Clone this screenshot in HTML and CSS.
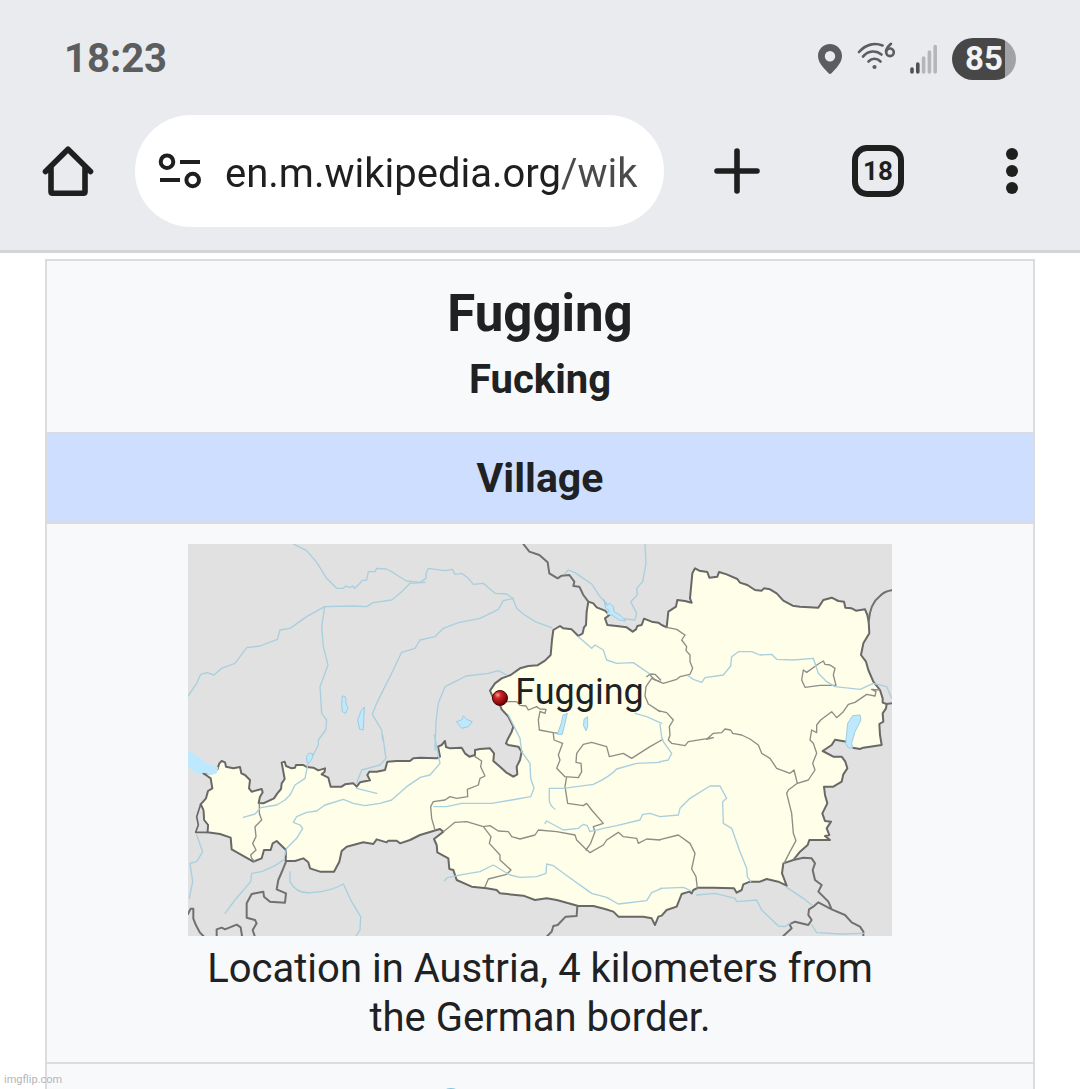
FILE: index.html
```html
<!DOCTYPE html>
<html lang="en">
<head>
<meta charset="utf-8">
<meta name="viewport" content="width=device-width, initial-scale=1">
<title>Fugging</title>
<link rel="stylesheet" href="styles.css">
</head>
<body>
<header class="chrome">
  <div class="status">
    <time class="clock">18:23</time>
    <div class="indicators">
      <svg class="pin" width="24" height="30" viewBox="0 0 24 30" aria-label="Location"><path fill="#5c5d5f" fill-rule="evenodd" d="M12 0C5.300 0 0 5.300 0 12c0 4.300 2.200 7.800 5 11.200l5.500 6q1.500 1.500 3 0l5.500-6c2.800-3.400 5-6.900 5-11.200C24 5.300 18.700 0 12 0Zm0 7a5.200 5.200 0 1 1 0 10.400A5.200 5.200 0 0 1 12 7Z"/></svg>
      <svg class="wifi" width="38" height="34" viewBox="0 0 38 34" aria-label="Wi-Fi 6"><g fill="none" stroke="#5c5d5f" stroke-width="2.600" stroke-linecap="round"><path d="M2 10C9 2 18 .5 25.500 3.500"/><path d="M6 14.500c5.500-6 13-6.500 18.500-2"/><path d="M11.500 19.500c3.500-3.600 8.500-3.600 12 0"/><path d="M34 1.800c-3 2.500-4.600 4.800-5 7.500"/><circle cx="33" cy="10.300" r="3.800"/></g><circle cx="17.500" cy="25" r="2.100" fill="#5c5d5f"/></svg>
      <svg class="signal" width="27" height="30" viewBox="0 0 27 30" aria-label="Signal"><g stroke-width="3.600" stroke-linecap="round"><path stroke="#505153" d="M2 25v3M7.800 20v8"/><path stroke="#b5b6b9" d="M13.600 14v14M19.400 8v20M25.200 2.500v25.500"/></g></svg>
      <span class="battery">85</span>
    </div>
  </div>
  <div class="toolbar">
    <button class="tool tool-home" type="button" aria-label="Home"><svg width="52" height="52" viewBox="0 0 52 52" fill="none" stroke="#1f1f1f" stroke-width="5.600" stroke-linecap="round" stroke-linejoin="round"><path d="M3.500 26.500 26 4.200 48.500 26.500M9 22v24.500q0 1.700 1.700 1.700h30.600q1.700 0 1.700-1.700V22"/></svg></button>
    <div class="omnibox">
      <svg width="44" height="38" viewBox="0 0 44 38" fill="none" stroke="#1f1f1f" stroke-width="4"><circle cx="9" cy="9.700" r="6.300"/><path d="M22 10h20M2 28h20"/><circle cx="34.700" cy="28" r="6.300"/></svg>
      <input class="address" type="text" aria-label="Address" value="en.m.wikipedia.org/wik">
    </div>
    <button class="tool tool-new" type="button" aria-label="New tab"><svg width="46" height="46" viewBox="0 0 46 46" stroke="#1f1f1f" stroke-width="5.600" stroke-linecap="round"><path d="M23 3v40M3 23h40"/></svg></button>
    <button class="tool tool-tabs" type="button" aria-label="Open tabs"><span class="tab-count">18</span></button>
    <button class="tool tool-menu" type="button" aria-label="Menu"><svg width="12" height="46" viewBox="0 0 12 46" fill="#1f1f1f"><circle cx="6" cy="6" r="6"/><circle cx="6" cy="23" r="6"/><circle cx="6" cy="40" r="6"/></svg></button>
  </div>
</header>
<main class="page">
  <table class="infobox">
    <tbody>
      <tr><th class="heading"><div class="name">Fugging</div><div class="former">Fucking</div></th></tr>
      <tr><th class="kind">Village</th></tr>
      <tr><td class="location">
        <div class="map">
          <svg class="map-art" viewBox="24 12 2112 1176" role="img" aria-label="Map of Austria" fill="none" stroke-linejoin="round" stroke-linecap="round">
            <path fill="#e1e1e1" d="M24 12h2112v1176H24z"/>
            <!-- country -->
            <path fill="#fefee9" stroke="#686866" stroke-width="6" d="M70 700L82 708 92 715 97 745 84 753 78 775 62 793 70 810 72 840 84 855 82 877
              120 882 152 893 155 928 220 965 245 955 252 930 272 930 278 910 290 903 318 930 317 963 345 963 370 955 385 967 390 985 420 995 462 995 478 965 485 933 500 920 550 907 580 912 590 898 620 907 625 902 650 902 660 910 690 900 720 885
              760 873 780 867 790 875 762 897 770 915 772 937 805 955 808 987 820 990 830 1020 875 1040 920 1045 950 1050 960 1060 1030 1067 1065 1080 1100 1075 1130 1080 1160 1088 1195 1098 1240 1098 1275 1107 1300 1115 1315 1130 1390 1130 1415 1135 1425 1155 1435 1130
              1445 1127 1460 1110 1490 1100 1505 1062 1528 1055 1535 1060 1540 1050 1555 1043 1600 1043 1662 1045 1670 1058 1685 1050 1690 1033 1710 1025 1740 1025 1760 1017 1795 1025 1820 1037 1806 1000 1810 970 1840 960 1860 935 1883 915 1888 900 1950 900 1935 888 1948 885 1940 865 1953 845 1935 843 1927 820 1942 790 1935 765 1932 740 1960 740 1985 725 1990 703 2002 685 1996 665 1985 650 1960 650 1928 633 1955 615 1965 599 2000 605 2018 623 2040 627 2050 623 2105 615
              2100 585 2098 552 2110 545 2108 520 2118 505 2120 492 2108 488 2108 475 2100 450 2080 425 2065 390 2058 365 2043 345 2050 310 2068 280 2066 245 2062 225 2055 208 2028 212 2015 205 1996 203 1992 185 1975 183 1955 173 1930 180 1915 203 1860 200 1838 197 1810 182 1790 160 1770 148 1752 145 1745 152 1725 150 1702 135 1680 128 1672 117 1640 103 1617 96 1612 110 1588 113 1582 96 1558 92 1545 85 1537 100 1530 175 1535 188 1515 183 1492 180 1488 200 1465 215 1460 262 1445 255
              1435 248 1415 245 1392 236 1385 255 1372 258 1368 268 1358 275 1340 262 1310 258 1282 255 1275 235 1288 225 1275 212 1250 202 1240 190 1225 185 1220 215 1218 255 1212 262 1208 280 1195 288 1175 268 1150 265 1140 258 1120 270 1116 300 1112 345 1095 362 1072 376 1045 378 1020 385 992 405 965 415 945 430 930 452 938 470 960 495 965 508 985 530 1000 560 995 575 982 600 978 610 985 615 1015 620 1025 635 1020 660 1010 680 1012 703 1000 710 978 697 960 680 940 663 942 640 930 625 900 627 885 630 885 645 868 650 855 640 845 623 810 625 798 621 795 603 785 615 774 620 780 650 770 655 720 653
              700 655 690 663 650 663 622 665 615 690 590 695 568 695 562 705 570 721 540 727 530 740 520 730 495 733 485 740 452 740 445 713 425 703 434 695 435 685 415 691 400 683 380 681 370 675 348 675 345 683 335 685 318 678 314 665 305 668 310 695 314 717 305 730 303 747 292 760 282 775 250 790 236 789 240 770 248 757 245 747 215 755 207 745 210 720 195 705 184 700 180 681 160 685 138 680 135 667 125 663 118 670 112 688 92 700z"/>
            <path fill="#e1e1e1" stroke="#686866" stroke-width="5" d="M62 793L50 830 55 855 47 877 82 877 84 855 72 840 70 810z"/>
            <!-- neighbouring borders -->
            <g stroke="#707070" stroke-width="6">
              <path d="M1030 12L1048 35 1078 45 1103 67 1108 100 1133 115 1145 107 1168 105 1183 125 1180 138 1198 140 1210 165 1225 185"/>
              <path d="M2066 245Q2070 190 2100 168 2115 153 2136 151M2118 492L2136 490"/>
              <path d="M24 1122L32 1106 40 1106 40 1136 48 1156 60 1178 70 1188M110 1188V1168L125 1163 135 1168 170 1154 182 1162 186 1188M318 965L308 990 295 1020 290 1048 318 1060 315 1088 270 1085 252 1070 250 1055 215 1062 200 1090 200 1133 225 1140 230 1150 218 1170 224 1188"/>
              <path d="M1192 1098L1190 1128 1157 1130 1133 1155 1120 1158 1115 1175 1102 1188"/>
              <path d="M1840 960L1870 953 1895 955 1905 970 1898 990 1905 1020 1925 1035 1915 1055 1930 1070 1945 1085 1955 1108 1915 1087 1900 1100 1887 1108 1885 1125 1895 1140 1885 1155 1845 1145 1828 1153 1835 1165 1810 1188M1955 1108L1995 1125 2015 1147 2040 1160 2050 1175 2050 1188"/>
            </g>
            <!-- provinces -->
            <g stroke="#8d8d86" stroke-width="4">
              <path d="M238 790L238 820 245 840 225 860 228 890 218 910 228 930 212 945 215 955 225 965"/>
              <g transform="translate(720 0)">
                <path d="M245 485L290 485 300 496 318 498 325 510 350 500 360 507 378 508 375 520 360 514 355 540 358 570 400 578 420 580M720 425L695 415 678 440 675 468 685 492 720 515M680 410L690 402 705 403 722 420"/>
              </g>
              <g transform="translate(1440 0)">
                <path d="M20 262L50 268 75 285 65 300 80 320 78 332 90 345 90 365 98 385 90 403 60 410 50 418 10 430-15 420-30 405M430 390L425 420 435 442 480 436 528 436 520 405 525 385 510 375 495 373 490 363 475 372 440 397 430 390M-5 512L20 518 40 540 28 560 30 585 25 600 35 610 75 617 85 605 160 593 140 598 160 580 185 578 195 567 212 570 218 580 245 585 270 597 295 615 305 640 330 655 350 685 390 700 402 690 412 730 445 720 465 690 458 670 470 640 460 610 450 600 455 570 470 578 470 555 482 540 515 515 530 533 550 515 565 493 585 487 620 463 645 468 648 455 635 448 658 450M412 730L385 750 380 760 395 820 400 880 408 902 390 935 372 970"/>
                <path d="M0 899L55 885 90 910 105 940 95 987 108 1010 112 1045"/>
              </g>
              <g transform="translate(720 585)">
                <path d="M165 65L185 78 182 95 195 123 180 130 175 150 142 163 143 185 110 190 90 185 75 195 40 200 32 215 35 250 45 285M70 290L105 262 140 260 190 275 213 305 208 325 240 360 240 375 273 405 260 418 205 432 195 455M190 275L210 272 235 288 265 290 275 305 300 312 345 300 355 285 410 290 465 300 470 315 495 340 510 353 550 330 560 315 595 292 610 305 650 310 655 325 680 312 720 315M400-5L402 15 428 25 415 60 420 75 410 100 435 125 475 128 485 110 483 85 468 82 470 55 490 28 515 22 560 35 568 65 610 55 635 70 690 35 725 15M440 125L435 155 443 205 490 212 500 205 515 225 550 265 520 275 525 290 512 325 498 345"/>
              </g>
            </g>
            <!-- rivers -->
            <g stroke="#a8cfde" stroke-width="4">
              <path d="M340 12L380 32 410 67 440 115 470 145 490 145 498 138 508 143 518 138 524 145 540 130 545 122 560 120 565 95 585 95 590 85 618 87 635 95 650 105 680 123 720 127 738 115 738 100 745 85 795 92 817 88 825 103 845 100 865 115 880 133 910 130 945 160 980 162 998 175 1010 205 1030 222 1065 245 1115 263"/>
              <path d="M24 468L50 430 62 403 80 398 102 405 125 385 165 370 200 323 240 318 292 298 300 270 330 265 380 230 434 200 520 198 560 200 580 188 635 180 665 155 690 130 735 127M434 200L425 260 430 320 444 375 420 440 425 520 440 540 437 570 415 600 415 615 400 645 385 665 380 690 375 715 345 735 330 765 315 780 290 795 242 803 225 822 190 832"/>
              <path d="M608 600L605 570 577 523 590 490 612 445 635 400 665 337 705 325 720 300 765 290 790 265 835 248 900 235 955 208 970 182 1000 175"/>
              <path d="M765 630L768 545 775 490 795 440 825 425 858 408 925 400 955 392 980 405M608 585L618 655 600 675 545 690 530 730"/>
              <g transform="translate(720 0)"><path d="M435 100L445 90 465 98 490 115 515 132 540 170 560 190M675 12L678 70 668 125 650 145 652 165 632 185 650 220 645 240 600 235M475 290L515 325 525 315 550 330 560 360 590 370 640 368 690 402M645 520L680 530 725 550"/></g>
              <g transform="translate(1440 0)"><path d="M85 408L100 418 125 427 135 413 190 405 212 378 215 350 235 335 275 335 300 345 335 343 350 358 400 360 460 355 475 400 500 425 525 440 600 448 640 430 680 440 695 475M0 553L5 590 10 605 35 640 25 660 0 665"/><path d="M0 830L55 825 60 805 90 775 150 738 180 738 200 775 188 785 190 850 215 865 240 935 260 985 262 1010 272 1025M0 1045L70 1042 95 1053M110 1065L165 1060 225 1075 230 1085 290 1080 305 1110 355 1158 375 1160 390 1150M380 1042L430 1075 455 1095M455 1155L470 1178 540 1182 610 1180"/></g>
              <g transform="translate(0 585)"><path d="M530 160L590 175M315 360L320 340 350 310 368 280 360 270 340 262 350 245 380 232 410 228 435 210 490 193 520 205 555 212 600 205 635 195 680 155 720 128M310 375L285 392 245 410 215 415 212 440 165 495 135 535M50 300L68 350 50 380 30 385 38 440 28 490M330 410L330 440Q350 480 400 472 450 470 490 447L515 500 542 545 540 585 528 603"/></g>
              <g transform="translate(720 585)"><path d="M43 0L60 85 30 120 0 127M265-60L300 10 305 50 330 85 332 130 342 160 332 185 275 195 215 205 125 205 80 215 42 215M405 222Q385 210 388 185V160H430L520 148Q570 125 590 102L650 85 720 82M375 265L380 258 430 285 475 280 490 268 502 272 510 290 550 280 590 272 660 255 668 238 690 235 720 245M73 437L82 428 130 418 180 410 220 390 270 420 300 427 350 425 378 415 380 387 400 392 445 425 515 475 560 487 595 507 680 497 695 473 725 460"/></g>
            </g>
            <!-- lakes -->
            <g fill="#bde8fd" stroke="#9fcce0" stroke-width="3">
              <path stroke="none" d="M24 632L50 645 80 670 115 682 110 700 95 705 70 698 52 705 24 680z"/>
              <path d="M488 468L496 470 499 495 504 503 497 520 487 515 485 495zM553 502L550 570 539 568 533 540 542 515zM387 640L397 640 397 655 388 668 380 665 380 650zM830 545L845 540 850 527 860 538 877 545 865 560 845 565 835 552zM1150 525L1162 520 1147 583 1132 583 1143 552zM1213 537L1223 530 1223 560 1218 572 1211 558zM1998 600L2003 550 2018 527 2040 525 2043 540 2025 575 2015 610 2018 625 2005 623 1998 612z"/>
              <path d="M1272 180L1280 196 1290 190 1300 200 1302 215 1320 225 1338 243 1318 240 1295 225 1280 222 1288 212 1278 205z"/>
            </g>
          </svg>
          <a class="marker" href="#fugging" id="fugging"><svg width="16" height="16" viewBox="0 0 16 16" aria-hidden="true"><defs><radialGradient id="ball" cx=".35" cy=".3" r=".7"><stop offset="0" stop-color="#f5a0a0"/><stop offset=".3" stop-color="#cf2727"/><stop offset="1" stop-color="#6d0000"/></radialGradient></defs><circle cx="8" cy="8" r="7.500" fill="url(#ball)" stroke="#430808"/></svg><span>Fugging</span></a>
        </div>
        <div class="caption">Location in Austria, 4 kilometers from the German border.</div>
      </td></tr>
      <tr><td class="next"><svg class="next-art" width="198" height="26" viewBox="0 0 198 26" aria-hidden="true"><circle cx="10" cy="37" r="13" fill="#7dc0de"/></svg></td></tr>
    </tbody>
  </table>
</main>
<div class="watermark">imgflip.com</div>
</body>
</html>
```
FILE: styles.css
```css
* { box-sizing: border-box; }
body {
  margin: 0;
  background: #fff;
  color: #202122;
  font-family: Roboto, "Liberation Sans", sans-serif;
}
.chrome {
  background: #eaebef;
  border-bottom: 3px solid #d3d4d6;
  padding-bottom: 23px;
}
.status {
  display: flex;
  align-items: center;
  justify-content: space-between;
  height: 115px;
  padding: 3px 64px 0;
}
.clock {
  font: 700 40px/44px Roboto, sans-serif;
  color: #5c5d5f;
}
.indicators { display: flex; align-items: center; gap: 15px; }
.battery {
  width: 64px;
  height: 42px;
  border-radius: 21px;
  background: linear-gradient(90deg, #474747 53px, #a1a2a5 53px);
  color: #f2f3f5;
  font: 700 33px/42px Roboto, sans-serif;
  text-align: center;
}
.toolbar { display: flex; align-items: center; padding-right: 2px; }
.tool {
  display: flex;
  align-items: center;
  justify-content: center;
  height: 112px;
  padding: 0;
  border: 0;
  background: none;
}
.tool-home { width: 135px; }
.tool-new { width: 146px; }
.tool-tabs { width: 136px; }
.tool-menu { width: 132px; }
.tab-count {
  width: 52px;
  height: 52px;
  border: 6px solid #1f1f1f;
  border-radius: 15px;
  color: #1f1f1f;
  font: 700 26px/40px Roboto, sans-serif;
}
.omnibox {
  flex: 1;
  min-width: 0;
  display: flex;
  align-items: center;
  gap: 23px;
  height: 112px;
  padding: 0 22px 0 23px;
  border-radius: 56px;
  background: #fff;
}
.omnibox svg { flex: none; }
.address {
  flex: 1;
  min-width: 0;
  height: 64px;
  padding: 4px 0 0;
  border: 0;
  outline: 0;
  background: linear-gradient(90deg, #1f1f1f 335px, #4a4a4a 335px);
  -webkit-background-clip: text;
  background-clip: text;
  color: transparent;
  font: 400 40px/60px Roboto, sans-serif;
}
.page { padding: 6px 45px 0; }
.infobox {
  width: 100%;
  border-collapse: collapse;
  background: #f8f9fb;
  text-align: center;
}
.infobox th, .infobox td { border: 2px solid #dadce0; padding: 0; }
.infobox .heading { padding: 20px; }
.name { font-size: 51px; line-height: 66px; }
.former { font-size: 40px; line-height: 65px; }
.infobox .kind {
  padding: 20px;
  background: #cedeff;
  font-size: 41px;
  line-height: 48px;
}
.infobox .location { padding: 20px; }
.map { position: relative; max-width: 704px; margin: 0 auto; }
.map-art { display: block; width: 100%; }
.marker {
  position: absolute;
  left: 43.200%;
  top: 31.600%;
  display: flex;
  align-items: center;
  gap: 7px;
  color: #202122;
  font-size: 36px;
  line-height: 48px;
  text-decoration: none;
}
.marker svg { margin-top: 12px; }
.caption {
  max-width: 704px;
  margin: 8px auto 0;
  font-size: 40px;
  line-height: 49px;
}
.next-art { display: block; margin: 0 auto; }
.watermark {
  position: absolute;
  left: 4px;
  top: 1072px;
  color: #b4b5b7;
  font-size: 11px;
  line-height: 16px;
}
```
